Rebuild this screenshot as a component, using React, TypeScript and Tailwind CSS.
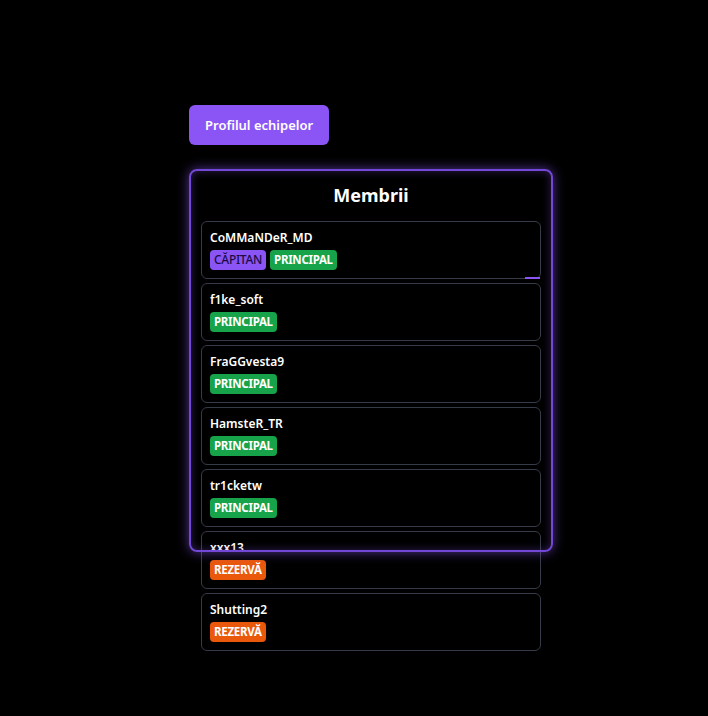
const MEMBERS = [
  { name: 'CoMMaNDeR_MD', captain: true, role: 'main' },
  { name: 'f1ke_soft', captain: false, role: 'main' },
  { name: 'FraGGvesta9', captain: false, role: 'main' },
  { name: 'HamsteR_TR', captain: false, role: 'main' },
  { name: 'tr1cketw', captain: false, role: 'main' },
  { name: 'xxx13', captain: false, role: 'sub' },
  { name: 'Shutting2', captain: false, role: 'sub' },
];

function Badge({ kind }: { kind: 'captain' | 'main' | 'sub' }) {
  if (kind === 'captain') {
    return (
      <span className="rounded bg-[#8b55f6] px-1 text-[12px] leading-5 font-medium tracking-tight text-[#1e0b45]">
        CĂPITAN
      </span>
    );
  }
  if (kind === 'main') {
    return (
      <span className="rounded bg-[#16a34a] px-1 text-[11.5px] leading-5 font-bold tracking-tight text-white">
        PRINCIPAL
      </span>
    );
  }
  return (
    <span className="rounded bg-[#ea580c] px-1 text-[11.5px] leading-5 font-bold tracking-tight text-white">
      REZERVĂ
    </span>
  );
}

export default function App() {
  return (
    <div
      className="min-h-[716px] bg-black pt-[105px] pl-[189px]"
      style={{ fontFamily: '"Noto Sans", "Open Sans", sans-serif' }}
    >
      <button className="rounded-md bg-[#8b55f6] px-4 py-2.5 text-[13px] leading-5 font-semibold text-white">
        Profilul echipelor
      </button>

      {/* Members panel, fixed height, list spills out below */}
      <div className="relative mt-6 h-[383px] w-[364px] px-3 pt-3">
        <h2 className="mb-3 text-center text-lg leading-7 font-bold text-white">Membrii</h2>
        <div className="flex flex-col gap-1">
          {MEMBERS.map((m, i) => (
            <div key={m.name} className="relative rounded-md border border-[#353b48] px-2 pt-2 pb-2">
              <div className="text-xs leading-4 font-semibold text-white">{m.name}</div>
              <div className="mt-1 flex gap-1">
                {m.captain && <Badge kind="captain" />}
                <Badge kind={m.role === 'main' ? 'main' : 'sub'} />
              </div>
              {i === 0 && <span className="absolute right-0 -bottom-px h-[2px] w-[15px] bg-[#8b55f6]" />}
            </div>
          ))}
        </div>
        <div className="pointer-events-none absolute inset-0 rounded-lg border-2 border-[#7448d6] shadow-[0_0_12px_rgba(139,85,246,0.6),inset_0_0_8px_rgba(139,85,246,0.35)]" />
      </div>
    </div>
  );
}
